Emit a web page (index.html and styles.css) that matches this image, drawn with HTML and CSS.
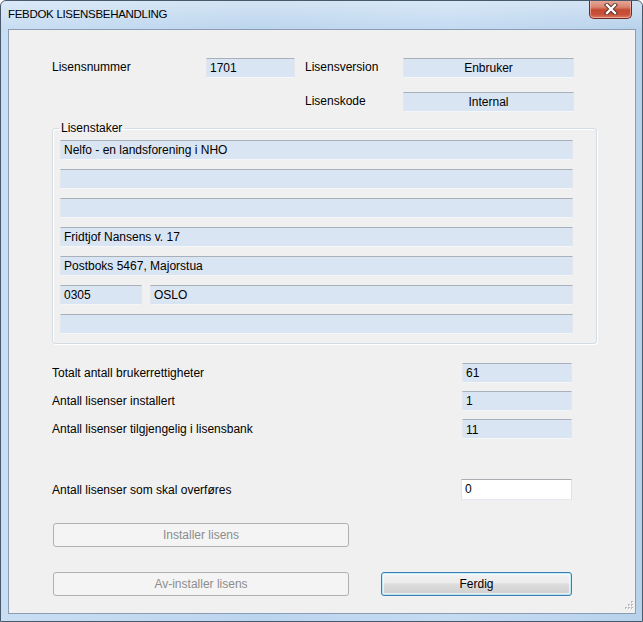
FILE: index.html
```html
<!DOCTYPE html>
<html lang="no">
<head>
<meta charset="utf-8">
<title>FEBDOK LISENSBEHANDLING</title>
<link rel="stylesheet" href="styles.css">
</head>
<body>
<div class="window">
  <div class="titlebar">
    <span class="title">FEBDOK LISENSBEHANDLING</span>
    <button class="close" aria-label="Lukk">
      <svg width="16" height="12" viewBox="0 0 16 12">
        <path d="M4 2 L12 10 M12 2 L4 10" stroke="#5a2a22" stroke-width="4.2" stroke-linecap="square" fill="none"/>
        <path d="M4 2 L12 10 M12 2 L4 10" stroke="#ffffff" stroke-width="2.4" stroke-linecap="square" fill="none"/>
      </svg>
    </button>
  </div>
  <div class="client">
    <div class="top-grid">
      <span class="label">Lisensnummer</span>
      <div class="field">1701</div>
      <span></span>
      <span class="label">Lisensversion</span>
      <div class="field center">Enbruker</div>
      <span></span><span></span><span></span>
      <span class="label">Lisenskode</span>
      <div class="field center">Internal</div>
    </div>

    <fieldset class="group">
      <legend>Lisenstaker</legend>
      <div class="field wide">Nelfo - en landsforening i NHO</div>
      <div class="field wide"></div>
      <div class="field wide"></div>
      <div class="field wide">Fridtjof Nansens v. 17</div>
      <div class="field wide">Postboks 5467, Majorstua</div>
      <div class="split">
        <div class="field zip">0305</div>
        <div class="field city">OSLO</div>
      </div>
      <div class="field wide"></div>
    </fieldset>

    <div class="stats">
      <div class="stat-row"><span class="label">Totalt antall brukerrettigheter</span><div class="field num">61</div></div>
      <div class="stat-row"><span class="label">Antall lisenser installert</span><div class="field num">1</div></div>
      <div class="stat-row"><span class="label">Antall lisenser tilgjengelig i lisensbank</span><div class="field num low">11</div></div>
      <div class="stat-row transfer"><span class="label">Antall lisenser som skal overføres</span><div class="field num input">0</div></div>
    </div>

    <div class="buttons">
      <div class="btn-row"><button class="btn disabled">Installer lisens</button></div>
      <div class="btn-row"><button class="btn disabled">Av-installer lisens</button><button class="btn primary">Ferdig</button></div>
    </div>

    <svg class="grip" width="12" height="12" viewBox="0 0 12 12">
      <g fill="#b8b8b8">
        <rect x="9" y="1" width="2" height="2"/>
        <rect x="6" y="4" width="2" height="2"/><rect x="9" y="4" width="2" height="2"/>
        <rect x="3" y="7" width="2" height="2"/><rect x="6" y="7" width="2" height="2"/><rect x="9" y="7" width="2" height="2"/>
      </g>
      <g fill="#ffffff">
        <rect x="10" y="2" width="1" height="1"/>
        <rect x="7" y="5" width="1" height="1"/><rect x="10" y="5" width="1" height="1"/>
        <rect x="4" y="8" width="1" height="1"/><rect x="7" y="8" width="1" height="1"/><rect x="10" y="8" width="1" height="1"/>
      </g>
    </svg>
  </div>
</div>
</body>
</html>
```

FILE: styles.css
```css
* { box-sizing: border-box; }

html, body {
  margin: 0;
  padding: 0;
  background: #ffffff;
}

body {
  font-family: "Liberation Sans", Arial, sans-serif;
  font-size: 12px;
  color: #000;
}

.window {
  width: 643px;
  height: 622px;
  border: 1px solid #48596b;
  border-radius: 6px 6px 0 0;
  background: linear-gradient(to right, #c9def3 0%, #bcd5ee 40%, #c4dbf2 70%, #b9d2ec 100%);
  display: flex;
  flex-direction: column;
  position: relative;
  overflow: hidden;
}

.titlebar {
  height: 28px;
  display: flex;
  align-items: flex-start;
  justify-content: space-between;
  padding-left: 7px;
  padding-right: 10px;
  background: linear-gradient(to bottom, rgba(255,255,255,0.35), rgba(255,255,255,0));
}

.title {
  font-size: 11.5px;
  letter-spacing: -0.3px;
  color: #000;
  margin-top: 7px;
}

.close {
  width: 43px;
  height: 19px;
  margin-top: -1px;
  padding: 0;
  border: 1px solid #6b2a21;
  border-top: none;
  border-radius: 0 0 5px 5px;
  background: linear-gradient(to bottom, #e9ab9c 0%, #d9836e 40%, #c44a32 55%, #c8503a 80%, #e07a5f 100%);
  box-shadow: inset 0 0 0 1px rgba(255,210,200,0.55);
  display: flex;
  align-items: center;
  justify-content: center;
}

.close svg { display: block; }

.client {
  flex: 1;
  margin: 0 6px 7px 7px;
  border: 1px solid #8c9db2;
  background: #f0f0f0;
  position: relative;
  padding: 28px 0 0 43px;
}

.label {
  line-height: 14px;
  white-space: nowrap;
}

.field {
  height: 20px;
  background: #dae5f3;
  border: 1px solid #e2e7ed;
  border-top-color: #a9b0b9;
  border-bottom-color: #f4f6f9;
  padding: 0 3px;
  line-height: 18px;
  white-space: nowrap;
  overflow: hidden;
}

.field.center { text-align: center; }

.top-grid {
  display: grid;
  grid-template-columns: 154px 89px 10px 98px 171px;
  grid-template-rows: 20px 20px;
  row-gap: 14px;
  align-items: start;
}

.top-grid .label { padding-top: 2px; }

.group {
  margin: 9px 0 0 0;
  width: 545px;
  border: 1px solid #d5dde3;
  border-radius: 3px;
  box-shadow: inset 1px 1px 0 #ffffff, 1px 1px 0 #ffffff;
  padding: 5px 23px 9px 7px;
  display: flex;
  flex-direction: column;
  gap: 9px;
}

.group legend {
  padding: 0 2px;
  margin-left: -1px;
  line-height: 14px;
}

.field.wide { width: 513px; }

.split {
  display: flex;
  gap: 8px;
  width: 513px;
}

.field.zip { width: 82px; flex: none; }
.field.city { flex: 1; }

.stats {
  margin-top: 19px;
  width: 520px;
  display: flex;
  flex-direction: column;
  gap: 8px;
}

.stat-row {
  display: flex;
  align-items: center;
  justify-content: space-between;
  height: 20px;
}

.field.num { width: 110px; }
.field.low { line-height: 21px; }

.stat-row.transfer {
  margin-top: 32px;
  height: 21px;
}

.field.input {
  height: 21px;
  width: 111px;
  background: #ffffff;
  border: 1px solid #abadb3;
  border-left-color: #e2e3ea;
  border-right-color: #dbdfe6;
  border-bottom-color: #e3e9ef;
  line-height: 19px;
}

.buttons {
  margin-top: 23px;
  display: flex;
  flex-direction: column;
  gap: 25px;
}

.btn-row {
  display: flex;
  gap: 32px;
  padding-left: 1px;
}

.btn {
  height: 24px;
  font-family: "Liberation Sans", Arial, sans-serif;
  font-size: 12px;
  padding: 0;
  border-radius: 3px;
}

.btn.disabled {
  width: 296px;
  border: 1px solid #adb2b5;
  background: #f4f4f4;
  color: #8d8d8d;
}

.btn.primary {
  width: 191px;
  border: 1px solid #3c7fb1;
  color: #000;
  background: linear-gradient(to bottom, #f2f2f2 0%, #ebebeb 45%, #dddddd 50%, #cfcfcf 100%);
  box-shadow: inset 0 0 0 1px #48d1fd55, inset 0 0 0 2px rgba(255,255,255,0.6);
}

.grip {
  position: absolute;
  right: 1px;
  bottom: 1px;
}
```
